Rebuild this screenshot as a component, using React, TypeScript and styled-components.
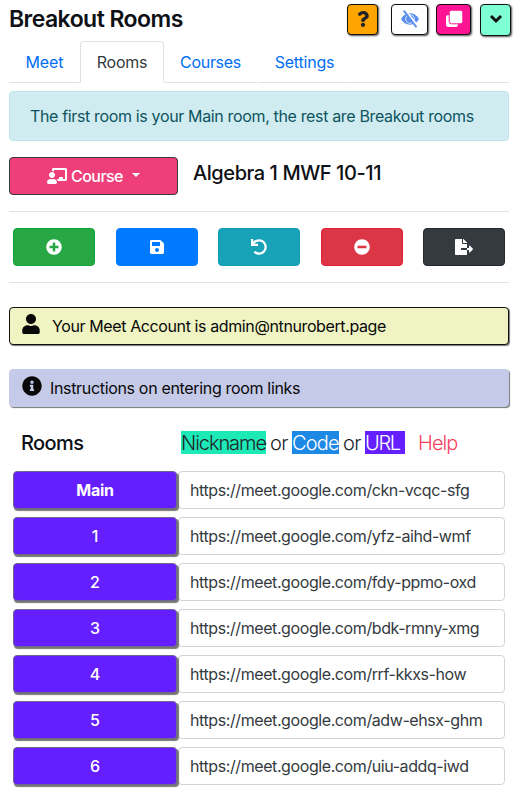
import React from "react";
import styled, { createGlobalStyle } from "styled-components";
import {
  FaQuestion, FaChalkboardTeacher, FaPlusCircle,
  FaSave, FaUndo, FaMinusCircle, FaFileExport, FaUser, FaInfoCircle,
} from "react-icons/fa";

const Global = createGlobalStyle`
  * { box-sizing: border-box; }
  body { margin: 0; background: #fff; color: #212529; font: 400 16px/24px Inter, "Liberation Sans", sans-serif; }
  h1, h2, p { margin: 0; }
  button, input { font: inherit; }
  svg { display: block; flex: none; }
`;

const Page = styled.main`
  width: 520px;
  height: 810px;
  padding: 0 11px 0 9px;
  display: flex;
  flex-direction: column;
  white-space: nowrap;
`;

const Label = styled.span<{ $track?: number; $weight?: number }>`
  letter-spacing: ${(p) => p.$track ?? 0}px;
  font-weight: ${(p) => p.$weight ?? 400};
`;

const Header = styled.header`
  height: 41px;
  display: flex;
  justify-content: space-between;
  margin-right: -2px;
`;

const Title = styled.h1`
  font-size: 23px;
  line-height: 38px;
  font-weight: 600;
  letter-spacing: -0.55px;
  color: #0d1014;
`;

const Tools = styled.div`
  display: flex;
  padding-top: 4px;
`;

const Tool = styled.button<{ $bg: string; $fg: string; $w: number; $h?: number; $gap?: number }>`
  width: ${(p) => p.$w}px;
  height: ${(p) => p.$h ?? 31}px;
  margin-left: ${(p) => p.$gap ?? 0}px;
  padding: 0 0 1px;
  display: flex;
  align-items: center;
  justify-content: center;
  color: ${(p) => p.$fg};
  background: ${(p) => p.$bg};
  border: 1.5px solid #111;
  border-radius: 4px;
  box-shadow: 1px 1px 2px #555;
`;

const Tabs = styled.nav`
  height: 42px;
  display: flex;
  border-bottom: 1px solid #dee2e6;
`;

const Tab = styled.a<{ $active?: boolean; $w: number }>`
  width: ${(p) => p.$w}px;
  height: 42px;
  padding-top: 8px;
  text-align: center;
  color: ${(p) => (p.$active ? "#343a40" : "#006ef5")};
  background: #fff;
  border: 1px solid ${(p) => (p.$active ? "#dee2e6" : "transparent")};
  border-bottom: ${(p) => (p.$active ? "1px solid #fff" : "1px solid #dee2e6")};
  border-radius: 4px 4px 0 0;
`;

const Notice = styled.div`
  height: 50px;
  margin-top: 8px;
  padding: 12px 20px;
  color: #0c5460;
  background: #d1ecf1;
  border: 1px solid #bee5eb;
  border-radius: 4px;
`;

const CourseRow = styled.section`
  height: 71px;
  padding-top: 16px;
  display: flex;
  border-bottom: 1px solid #dfe5e5;
`;

const CourseButton = styled.button`
  width: 169px;
  height: 38px;
  padding: 0;
  display: flex;
  align-items: center;
  justify-content: center;
  gap: 4px;
  color: #fff;
  background: #ef3f7b;
  border: 1px solid #343a40;
  border-radius: 4px;
`;

const Caret = styled.i`
  margin: -2px 0 0 5px;
  border: 4.8px solid transparent;
  border-top-color: #fff;
  border-bottom: 0;
`;

const CourseName = styled.h2`
  margin-left: 15px;
  font-size: 20px;
  line-height: 33px;
  font-weight: 500;
  letter-spacing: -0.43px;
  color: #0d1014;
`;

const Actions = styled.section`
  height: 71px;
  padding: 16px 4px 0;
  display: flex;
  justify-content: space-between;
  border-bottom: 1px solid #dfe5e5;
`;

const Action = styled.button<{ $bg: string; $edge: string }>`
  width: 82px;
  height: 38px;
  padding: 0;
  display: flex;
  align-items: center;
  justify-content: center;
  color: #fff;
  background: ${(p) => p.$bg};
  border: 1px solid ${(p) => p.$edge};
  border-radius: 4px;
`;

const Banner = styled.div<{ $bg: string; $edge: string; $top: number }>`
  height: 38px;
  margin-top: ${(p) => p.$top}px;
  padding: 0 12px;
  display: flex;
  align-items: center;
  color: #080808;
  background: ${(p) => p.$bg};
  border: 1px solid ${(p) => p.$edge};
  border-radius: 4px;
  box-shadow: 1px 1px 1px #777;
`;

const BannerIcon = styled.span<{ $gap: number; $shift?: number }>`
  margin: -4px ${(p) => p.$gap}px 0 ${(p) => p.$shift ?? 0}px;
`;

const Legend = styled.div`
  margin-top: 23px;
  height: 41px;
  padding-left: 12px;
  display: flex;
  font-size: 20px;
  line-height: 26px;
  color: #0d1014;
`;

const LegendTitle = styled.h2`
  width: 160px;
  font-size: 20px;
  line-height: 27px;
  font-weight: 500;
  letter-spacing: -0.6px;
`;

const Formats = styled.p`
  display: flex;
  font-weight: 300;
`;

const Mark = styled.span<{ $w: number; $bg?: string; $fg?: string; $track?: number }>`
  width: ${(p) => p.$w}px;
  height: 23px;
  margin-top: 1px;
  line-height: 25px;
  background: ${(p) => p.$bg ?? "transparent"};
  color: ${(p) => p.$fg ?? "#212529"};
  letter-spacing: ${(p) => p.$track ?? -0.6}px;
  text-align: ${(p) => (p.$bg ? "left" : "center")};
`;

const HelpLink = styled.a`
  margin-left: 13px;
  line-height: 27px;
  color: #f9415f;
  font-weight: 300;
  letter-spacing: -0.9px;
`;

const RoomList = styled.section`
  display: grid;
  gap: 8px;
  padding: 0 4px;
`;

const RoomRow = styled.div`
  height: 38px;
  display: grid;
  grid-template-columns: 165px 327px;
`;

const RoomButton = styled.button<{ $bold?: boolean }>`
  width: 164px;
  padding: 0;
  color: #fff;
  font-weight: ${(p) => (p.$bold ? 700 : 500)};
  letter-spacing: ${(p) => (p.$bold ? -0.3 : 0)}px;
  background: #651fff;
  border: 1px solid #6c6692;
  border-radius: 4px;
  box-shadow: 1.5px 2px 1px #777770;
  z-index: 1;
`;

const RoomInput = styled.input`
  width: 327px;
  height: 38px;
  padding: 0 11px;
  color: #343a40;
  background: #fff;
  border: 1px solid #ced4da;
  border-radius: 4px;
  letter-spacing: -0.41px;
`;

const HiddenEyeIcon = () => (
  <svg width="20" height="18" viewBox="0 0 20 18" fill="none">
    <path d="M1 9C3 5.3 6.2 3.3 10 3.3S17 5.3 19 9c-2 3.7-5.2 5.7-9 5.7S3 12.7 1 9Z" fill="currentColor" />
    <circle cx="10" cy="9" r="4.3" stroke="#fff" strokeWidth=".8" />
    <path d="m5.2 1.2 12 15" stroke="#fff" strokeWidth="3" />
    <path d="m4.2 1.2 11.8 15.4" stroke="currentColor" strokeWidth="1.9" strokeLinecap="round" />
  </svg>
);

const CopiesIcon = () => (
  <svg width="18" height="18" viewBox="0 0 18 18">
    <rect x="1" y="5" width="12" height="12" rx="2.2" fill="currentColor" />
    <rect x="4.2" y=".2" width="13.6" height="13.6" rx="2.4" fill="currentColor" stroke="#ff1493" strokeWidth="1" />
  </svg>
);

const ChevronIcon = () => (
  <svg width="14" height="12" viewBox="0 0 14 12" fill="none">
    <path d="m2 2 5 5 5-5" stroke="currentColor" strokeWidth="2.9" />
  </svg>
);

const rooms = [
  ["Main", "ckn-vcqc-sfg"],
  ["1", "yfz-aihd-wmf"],
  ["2", "fdy-ppmo-oxd"],
  ["3", "bdk-rmny-xmg"],
  ["4", "rrf-kkxs-how"],
  ["5", "adw-ehsx-ghm"],
  ["6", "uiu-addq-iwd"],
];

export default function App() {
  return (
    <Page>
      <Global />
      <Header>
        <Title>Breakout Rooms</Title>
        <Tools>
          <Tool $bg="#ffa500" $fg="#212529" $w={31}><FaQuestion size={16} /></Tool>
          <Tool $bg="#fff" $fg="#5b8def" $w={37} $gap={13}><HiddenEyeIcon /></Tool>
          <Tool $bg="#ff1493" $fg="#fff" $w={35} $gap={8}><CopiesIcon /></Tool>
          <Tool $bg="#7fffd4" $fg="#111" $w={31} $h={32} $gap={9}><ChevronIcon /></Tool>
        </Tools>
      </Header>
      <Tabs>
        <Tab $w={71}><Label $track={-0.1}>Meet</Label></Tab>
        <Tab $w={84} $active><Label $track={-0.2}>Rooms</Label></Tab>
        <Tab $w={93}><Label $track={-0.3}>Courses</Label></Tab>
        <Tab $w={95}><Label $track={-0.2}>Settings</Label></Tab>
      </Tabs>
      <Notice><Label $track={-0.35}>The first room is your Main room, the rest are Breakout rooms</Label></Notice>
      <CourseRow>
        <CourseButton>
          <FaChalkboardTeacher size={20} />
          <Label $track={-0.55} $weight={500}>Course</Label>
          <Caret />
        </CourseButton>
        <CourseName>Algebra 1 MWF 10-11</CourseName>
      </CourseRow>
      <Actions>
        <Action $bg="#28a745" $edge="#12a336"><FaPlusCircle size={16} /></Action>
        <Action $bg="#007bff" $edge="#007bff"><FaSave size={16} /></Action>
        <Action $bg="#17a2b8" $edge="#109db5"><FaUndo size={16} /></Action>
        <Action $bg="#dc3545" $edge="#e02038"><FaMinusCircle size={16} /></Action>
        <Action $bg="#343a40" $edge="#24292f"><FaFileExport size={18} /></Action>
      </Actions>
      <Banner $bg="#f0f4c3" $edge="#111" $top={24}>
        <BannerIcon $gap={11} $shift={-1}><FaUser size={20} /></BannerIcon>
        <Label $track={-0.39}>Your Meet Account is admin@ntnurobert.page</Label>
      </Banner>
      <Banner $bg="#c5cae9" $edge="#c5cae9" $top={24}>
        <BannerIcon $gap={8}><FaInfoCircle size={20} /></BannerIcon>
        <Label $track={-0.33}>Instructions on entering room links</Label>
      </Banner>
      <Legend>
        <LegendTitle>Rooms</LegendTitle>
        <Formats>
          <Mark $w={85} $bg="#1de9b6" $track={-1.05}>Nickname</Mark>
          <Mark $w={26}>or</Mark>
          <Mark $w={47} $bg="#1e88e5" $fg="#fff" $track={-0.8}>Code</Mark>
          <Mark $w={26}>or</Mark>
          <Mark $w={40} $bg="#651fff" $fg="#fff" $track={-1.3}>URL</Mark>
          <HelpLink>Help</HelpLink>
        </Formats>
      </Legend>
      <RoomList>
        {rooms.map(([name, code]) => (
          <RoomRow key={name}>
            <RoomButton $bold={name === "Main"}>{name}</RoomButton>
            <RoomInput readOnly value={`https://meet.google.com/${code}`} />
          </RoomRow>
        ))}
      </RoomList>
    </Page>
  );
}
